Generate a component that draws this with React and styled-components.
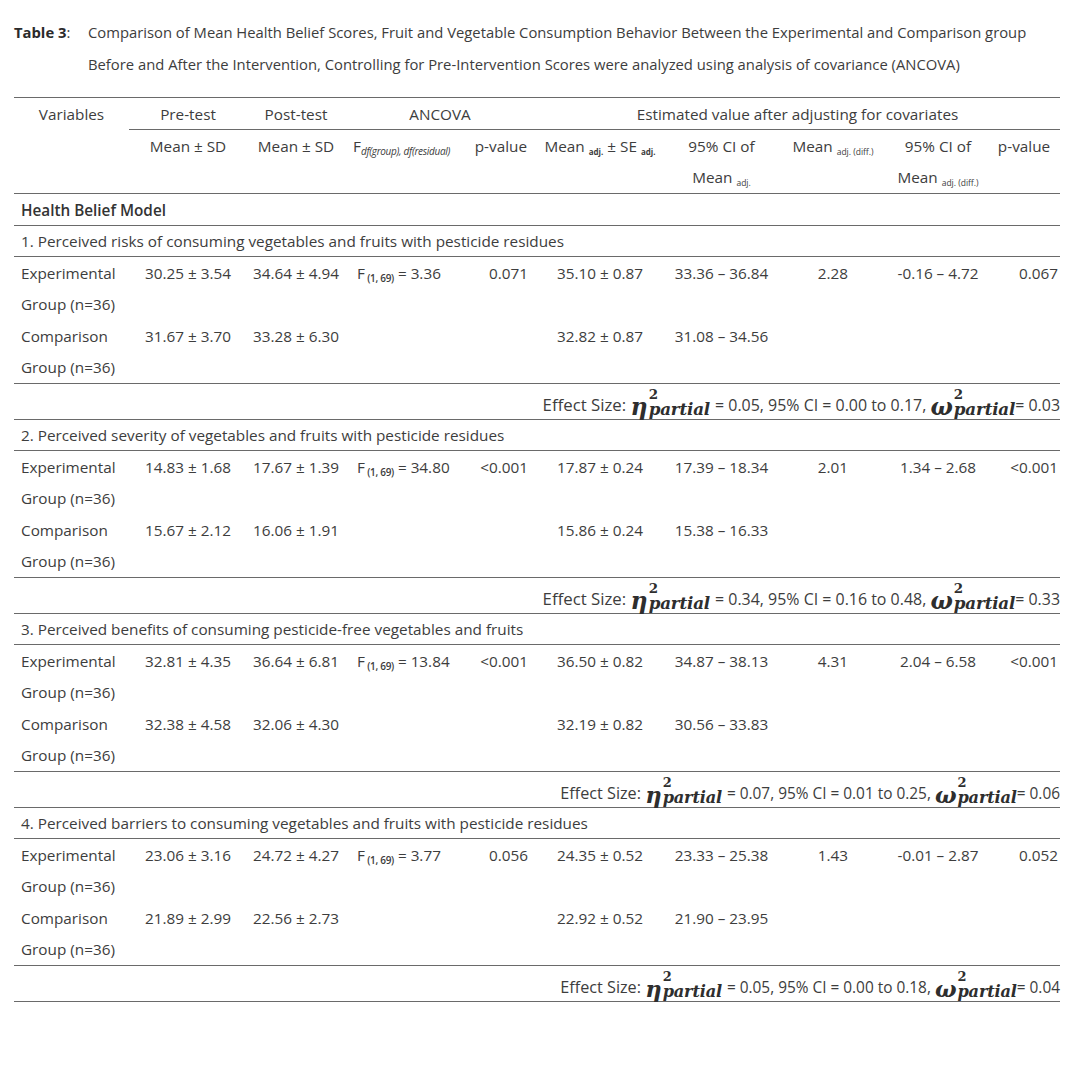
import React from "react";
import styled, { createGlobalStyle } from "styled-components";

const Global = createGlobalStyle`
  html, body { margin: 0; padding: 0; background: #ffffff; }
  body { font-family: "Open Sans", "Noto Sans", sans-serif; color: #3d3d3d; }
`;

const Page = styled.div`
  width: 1080px;
  padding: 16px 0 0 14px;
  box-sizing: border-box;
`;

const Caption = styled.div`
  display: flex;
  font-size: 14.8px;
  line-height: 32px;
  color: #3d3d3d;
`;

const CaptionLabel = styled.div`
  flex: 0 0 74px;
  white-space: nowrap;
  b { font-weight: 700; color: #2a2a2a; }
`;

const CaptionText = styled.div`
  flex: 1;
  white-space: nowrap;
`;

const Table = styled.table`
  margin-top: 17px;
  width: 1046px;
  border-collapse: collapse;
  table-layout: fixed;
  font-size: 15.3px;
  color: #3d3d3d;
  border-top: 1.5px solid #6a6a6a;
`;

const Cell = styled.td`
  padding: 0;
  white-space: nowrap;
  text-align: ${(p) => p.$align || "center"};
  vertical-align: ${(p) => p.$valign || "middle"};
  padding-left: ${(p) => p.$pl || 0}px;
  padding-right: ${(p) => p.$pr || 0}px;
  padding-top: ${(p) => p.$pt || 0}px;
  border-bottom: ${(p) => (p.$line ? "1.5px solid #6a6a6a" : "none")};
`;

const HeadRow = styled.tr`
  height: 32px;
`;

const TopLabel = styled.div`
  line-height: 32px;
`;

const GroupRow = styled.tr`
  height: 32px;
  td { font-weight: 600; color: #333; }
`;

const TitleRow = styled.tr`
  height: 31px;
`;

const DataRow = styled.tr`
  height: 31.75px;
`;

const EffectRow = styled.tr`
  height: 36px;
`;

const Sub = styled.sub`
  font-size: ${(p) => p.$size || 8}px;
  font-weight: ${(p) => p.$weight || 400};
  font-style: ${(p) => (p.$italic ? "italic" : "normal")};
  vertical-align: ${(p) => p.$drop || -3}px;
  line-height: 0;
  letter-spacing: ${(p) => p.$ls || 0}px;
`;

const EffectText = styled.span`
  display: inline-flex;
  align-items: baseline;
  white-space: nowrap;
  line-height: 1.2;
  font-size: ${(p) => 16.8 * p.$scale}px;
`;

const Small = styled.span`
  font-size: 0.95em;
  white-space: pre;
`;

const MathGroup = styled.span`
  display: inline-flex;
  align-items: baseline;
  margin: 0 ${(p) => p.$mr}px 0 ${(p) => p.$ml}px;
  font-family: "DejaVu Serif", "Liberation Serif", serif;
  font-weight: 700;
  font-style: italic;
  color: #2e2e2e;
  position: relative;
  top: 4px;
`;

const Sym = styled.span`
  font-size: 1.4em;
  line-height: 1;
  margin-right: 1px;
`;

const Stack = styled.span`
  position: relative;
  display: inline-block;
  line-height: 1;
`;

const Sq = styled.span`
  position: absolute;
  left: 0;
  top: -1.02em;
  font-size: 0.8em;
  line-height: 1;
  font-style: normal;
`;

const Partial = styled.span`
  font-size: 1em;
  letter-spacing: -0.2px;
`;

const sections = [
  {
    title: "1. Perceived risks of consuming vegetables and fruits with pesticide residues",
    exp: ["30.25 ± 3.54", "34.64 ± 4.94", "3.36", "0.071", "35.10 ± 0.87", "33.36 – 36.84", "2.28", "-0.16 – 4.72", "0.067"],
    comp: ["31.67 ± 3.70", "33.28 ± 6.30", "32.82 ± 0.87", "31.08 – 34.56"],
    eff: ["0.05", "0.00 to 0.17", "0.03"],
    scale: 1,
  },
  {
    title: "2. Perceived severity of vegetables and fruits with pesticide residues",
    exp: ["14.83 ± 1.68", "17.67 ± 1.39", "34.80", "<0.001", "17.87 ± 0.24", "17.39 – 18.34", "2.01", "1.34 – 2.68", "<0.001"],
    comp: ["15.67 ± 2.12", "16.06 ± 1.91", "15.86 ± 0.24", "15.38 – 16.33"],
    eff: ["0.34", "0.16 to 0.48", "0.33"],
    scale: 1,
  },
  {
    title: "3. Perceived benefits of consuming pesticide-free vegetables and fruits",
    exp: ["32.81 ± 4.35", "36.64 ± 6.81", "13.84", "<0.001", "36.50 ± 0.82", "34.87 – 38.13", "4.31", "2.04 – 6.58", "<0.001"],
    comp: ["32.38 ± 4.58", "32.06 ± 4.30", "32.19 ± 0.82", "30.56 – 33.83"],
    eff: ["0.07", "0.01 to 0.25", "0.06"],
    scale: 0.965,
  },
  {
    title: "4. Perceived barriers to consuming vegetables and fruits with pesticide residues",
    exp: ["23.06 ± 3.16", "24.72 ± 4.27", "3.77", "0.056", "24.35 ± 0.52", "23.33 – 25.38", "1.43", "-0.01 – 2.87", "0.052"],
    comp: ["21.89 ± 2.99", "22.56 ± 2.73", "22.92 ± 0.52", "21.90 – 23.95"],
    eff: ["0.05", "0.00 to 0.18", "0.04"],
    scale: 0.965,
  },
];

const cols = [115, 118, 98, 117, 73, 130, 113, 110, 100, 72];

function Symbol({ ch, ml, mr }) {
  return (
    <MathGroup $ml={ml} $mr={mr}>
      <Sym>{ch}</Sym>
      <Stack>
        <Sq>2</Sq>
        <Partial>partial</Partial>
      </Stack>
    </MathGroup>
  );
}

function Effect({ eff, scale }) {
  return (
    <EffectText $scale={scale}>
      <span>Effect Size:&nbsp;</span>
      <Symbol ch="η" ml={0} mr={5} />
      <Small>{`= ${eff[0]}, 95% CI = ${eff[1]}, `}</Small>
      <Symbol ch="ω" ml={0} mr={0} />
      <Small>{`= ${eff[2]}`}</Small>
    </EffectText>
  );
}

function Section({ s }) {
  const e = s.exp;
  const c = s.comp;
  return (
    <>
      <TitleRow>
        <Cell colSpan={10} $align="left" $pl={7} $line>
          {s.title}
        </Cell>
      </TitleRow>
      <DataRow>
        <Cell $align="left" $pl={7}>Experimental</Cell>
        <Cell>{e[0]}</Cell>
        <Cell>{e[1]}</Cell>
        <Cell $align="left" $pl={12}>
          F<Sub $size={10} $weight={600} $ls={-0.3}>{" (1, 69)"}</Sub> = {e[2]}
        </Cell>
        <Cell $align="right" $pr={7}>{e[3]}</Cell>
        <Cell>{e[4]}</Cell>
        <Cell>{e[5]}</Cell>
        <Cell>{e[6]}</Cell>
        <Cell>{e[7]}</Cell>
        <Cell $align="right" $pr={2}>{e[8]}</Cell>
      </DataRow>
      <DataRow>
        <Cell $align="left" $pl={7}>Group (n=36)</Cell>
        <Cell colSpan={9} />
      </DataRow>
      <DataRow>
        <Cell $align="left" $pl={7}>Comparison</Cell>
        <Cell>{c[0]}</Cell>
        <Cell>{c[1]}</Cell>
        <Cell />
        <Cell />
        <Cell>{c[2]}</Cell>
        <Cell>{c[3]}</Cell>
        <Cell colSpan={3} />
      </DataRow>
      <DataRow>
        <Cell $align="left" $pl={7} $line>Group (n=36)</Cell>
        <Cell colSpan={9} $line />
      </DataRow>
      <EffectRow>
        <Cell colSpan={10} $align="right" $pr={0} $pt={5} $line>
          <Effect eff={s.eff} scale={s.scale} />
        </Cell>
      </EffectRow>
    </>
  );
}

export default function App() {
  return (
    <Page>
      <Global />
      <Caption>
        <CaptionLabel>
          <b>Table 3</b>:
        </CaptionLabel>
        <CaptionText>
          Comparison of Mean Health Belief Scores, Fruit and Vegetable Consumption Behavior Between the Experimental and Comparison group
          <br />
          Before and After the Intervention, Controlling for Pre-Intervention Scores were analyzed using analysis of covariance (ANCOVA)
        </CaptionText>
      </Caption>
      <Table>
        <colgroup>
          {cols.map((w, i) => (
            <col key={i} style={{ width: w }} />
          ))}
        </colgroup>
        <tbody>
          <HeadRow>
            <Cell rowSpan={3} $valign="top" $line>
              <TopLabel>Variables</TopLabel>
            </Cell>
            <Cell $line>Pre-test</Cell>
            <Cell $line>Post-test</Cell>
            <Cell colSpan={2} $line>ANCOVA</Cell>
            <Cell colSpan={5} $line>Estimated value after adjusting for covariates</Cell>
          </HeadRow>
          <HeadRow>
            <Cell>Mean ± SD</Cell>
            <Cell>Mean ± SD</Cell>
            <Cell $align="left" $pl={8}>
              F<Sub $size={10} $italic $ls={-0.3}>df(group), df(residual)</Sub>
            </Cell>
            <Cell $align="right" $pr={8}>p-value</Cell>
            <Cell>
              Mean <Sub $size={8} $weight={700}>adj.</Sub> ± SE <Sub $size={8} $weight={700}>adj.</Sub>
            </Cell>
            <Cell>95% CI of</Cell>
            <Cell>
              Mean <Sub $size={8.5}>adj. (diff.)</Sub>
            </Cell>
            <Cell>95% CI of</Cell>
            <Cell>p-value</Cell>
          </HeadRow>
          <HeadRow>
            <Cell $line />
            <Cell $line />
            <Cell $line />
            <Cell $line />
            <Cell $line />
            <Cell $line>
              Mean <Sub $size={8.5}>adj.</Sub>
            </Cell>
            <Cell $line />
            <Cell $line>
              Mean <Sub $size={8.5}>adj. (diff.)</Sub>
            </Cell>
            <Cell $line />
          </HeadRow>
          <GroupRow>
            <Cell colSpan={10} $align="left" $pl={7} $line>
              Health Belief Model
            </Cell>
          </GroupRow>
          {sections.map((s, i) => (
            <Section key={i} s={s} />
          ))}
        </tbody>
      </Table>
    </Page>
  );
}
